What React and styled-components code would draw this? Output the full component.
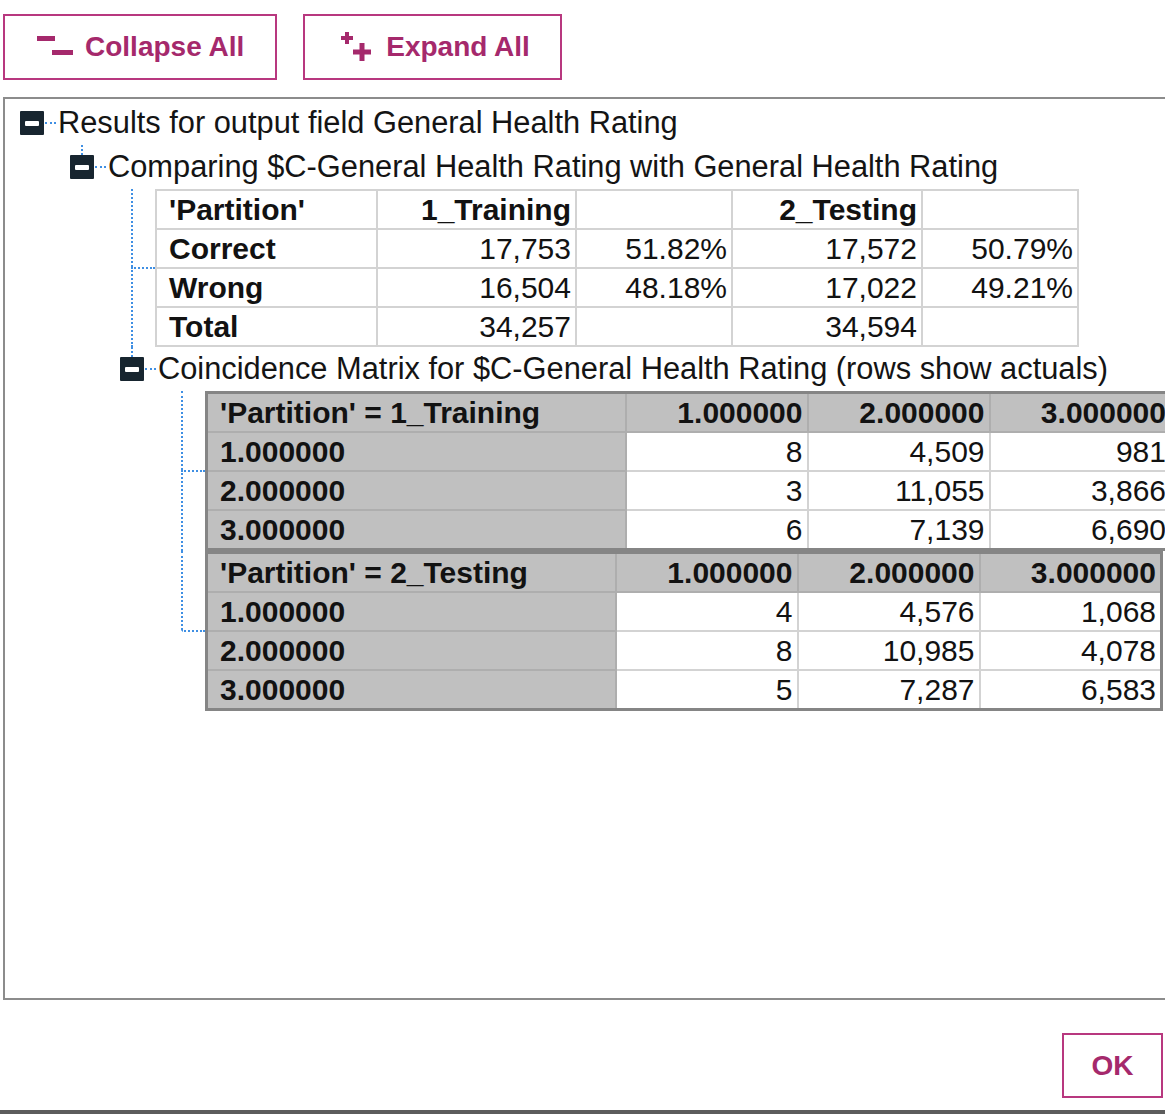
import React from 'react';
import styled, { createGlobalStyle } from 'styled-components';

const GlobalStyle = createGlobalStyle`
  html, body {
    margin: 0;
    padding: 0;
    background: #ffffff;
    overflow: hidden;
  }
  body {
    font-family: 'Liberation Sans', Arial, sans-serif;
    color: #151515;
  }
`

const Page = styled.div`
  width: 1165px;
  height: 1114px;
  display: flex;
  flex-direction: column;
  padding: 14px 0 0 3px;
  box-sizing: border-box;
`
const Toolbar = styled.div`
  display: flex;
  gap: 26px;
  height: 66px;
`
const ActionButton = styled.button`
  display: flex;
  align-items: center;
  gap: 12px;
  height: 66px;
  padding: 0 ${p => p.$padRight || 31}px 0 ${p => p.$padLeft || 32}px;
  background: #ffffff;
  border: 2px solid #b8387f;
  border-radius: 0;
  color: #a5296c;
  font-family: 'Liberation Sans', Arial, sans-serif;
  font-weight: bold;
  font-size: 28px;
  cursor: pointer;
  box-sizing: border-box;
`
const Panel = styled.div`
  margin-top: 17px;
  width: 1220px;
  height: 904px;
  border: 2px solid #8c8c8c;
  box-sizing: border-box;
  padding: 2px 0 0 15px;
  overflow: hidden;
`
const Footer = styled.div`
  display: flex;
  justify-content: flex-end;
  padding: 33px 2px 0 0;
`
const OkButton = styled(ActionButton)`
  width: 101px;
  height: 65px;
  justify-content: center;
  padding: 0;
`
const BottomBar = styled.div`
  margin: 12px 0 0 -3px;
  height: 4px;
  background: #5c5c5c;
`

/* tree */
const NodeRow = styled.div`
  display: flex;
  align-items: stretch;
  height: 44px;
`
const IconCol = styled.div`
  display: flex;
  flex-direction: column;
  width: 24px;
  flex-shrink: 0;
`
const Stem = styled.div`
  flex: 1;
  width: 11px;
  border-right: ${p => (p.$on ? '2px dotted #3f8fe3' : '2px solid transparent')};
`
const MinusBox = styled.div`
  width: 24px;
  height: 24px;
  background: #17252f;
  border-radius: 1px;
  display: flex;
  align-items: center;
  justify-content: center;
  &::before {
    content: '';
    width: 14px;
    height: 5px;
    background: #ffffff;
    border-radius: 1px;
  }
`
const HDots = styled.div`
  align-self: center;
  width: 11px;
  margin: 0 2px 0 1px;
  border-top: 2px dotted #3f8fe3;
`
const Label = styled.div`
  align-self: center;
  font-size: 30.8px;
  white-space: nowrap;
  color: #141414;
`
const Children = styled.div`
  margin-left: 50px;
  display: flex;
  flex-direction: column;
`
const Item = styled.div`
  display: flex;
`
const Gutter = styled.div`
  display: flex;
  flex-direction: column;
  width: 35px;
  flex-shrink: 0;
`
const GutterHalf = styled.div`
  flex: 1;
  margin-left: 11px;
  border-left: ${p => (p.$line ? '2px dotted #3f8fe3' : '2px solid transparent')};
  border-top: ${p => (p.$branch ? '2px dotted #3f8fe3' : 'none')};
`

/* tables */
const SummaryTable = styled.table`
  border-collapse: collapse;
  table-layout: fixed;
  border: 2px solid #a3a3a3;
  font-size: 30px;
`
const MatrixTable = styled.table`
  border-collapse: collapse;
  table-layout: fixed;
  border: 3px solid #858585;
  font-size: 30px;
  background: #c0c0c0;
`
const Cell = styled.td`
  height: 37px;
  padding: 0 ${p => (p.$right ? '4px' : '0')} 0 ${p => (p.$right ? '0' : '12px')};
  text-align: ${p => (p.$right ? 'right' : 'left')};
  font-weight: ${p => (p.$bold ? 'bold' : 'normal')};
  white-space: nowrap;
  overflow: hidden;
  color: #121212;
  border: 2px solid ${p => (p.$shade ? '#aeaeae' : '#d3d3d3')};
  background: ${p => (p.$shade ? '#c0c0c0' : '#ffffff')};
  line-height: 37px;
`

const CollapseIcon = () => (
  <svg width="36" height="22" viewBox="0 0 36 22">
    <rect x="0" y="0" width="18" height="5" fill="#a5296c" />
    <rect x="15" y="14" width="21" height="5" fill="#a5296c" />
  </svg>
)
const ExpandIcon = () => (
  <svg width="36" height="30" viewBox="0 0 36 30">
    <rect x="3" y="4" width="12" height="4" fill="#a5296c" />
    <rect x="7" y="0" width="4" height="12" fill="#a5296c" />
    <rect x="15" y="17.5" width="18" height="5" fill="#a5296c" />
    <rect x="21.5" y="11" width="5" height="18" fill="#a5296c" />
  </svg>
)

const Node = ({ label, stem, children }) => (
  <>
    <NodeRow>
      <IconCol>
        <Stem $on={stem} />
        <MinusBox />
        <Stem />
      </IconCol>
      <HDots />
      <Label>{label}</Label>
    </NodeRow>
    {children && <Children>{children}</Children>}
  </>
)

const Leaf = ({ last, children }) => (
  <Item>
    <Gutter>
      <GutterHalf $line />
      <GutterHalf $line={!last} $branch />
    </Gutter>
    {children}
  </Item>
)

const summary = [
  ['Correct', '17,753', '51.82%', '17,572', '50.79%'],
  ['Wrong', '16,504', '48.18%', '17,022', '49.21%'],
  ['Total', '34,257', '', '34,594', ''],
]

const matrices = [
  {
    title: "'Partition' = 1_Training",
    labelWidth: 419,
    rows: [
      ['1.000000', '8', '4,509', '981'],
      ['2.000000', '3', '11,055', '3,866'],
      ['3.000000', '6', '7,139', '6,690'],
    ],
  },
  {
    title: "'Partition' = 2_Testing",
    labelWidth: 409,
    rows: [
      ['1.000000', '4', '4,576', '1,068'],
      ['2.000000', '8', '10,985', '4,078'],
      ['3.000000', '5', '7,287', '6,583'],
    ],
  },
]

const Summary = () => (
  <SummaryTable>
    <colgroup>
      <col style={{ width: 221 }} />
      <col style={{ width: 199 }} />
      <col style={{ width: 156 }} />
      <col style={{ width: 190 }} />
      <col style={{ width: 156 }} />
    </colgroup>
    <tbody>
      <tr>
        <Cell $bold>'Partition'</Cell>
        <Cell $bold $right>1_Training</Cell>
        <Cell $right></Cell>
        <Cell $bold $right>2_Testing</Cell>
        <Cell $right></Cell>
      </tr>
      {summary.map(([name, ...vals]) => (
        <tr key={name}>
          <Cell $bold>{name}</Cell>
          {vals.map((v, i) => (
            <Cell key={i} $right>{v}</Cell>
          ))}
        </tr>
      ))}
    </tbody>
  </SummaryTable>
)

const Matrix = ({ title, labelWidth, rows }) => (
  <MatrixTable style={{ width: labelWidth + 546 }}>
    <colgroup>
      <col style={{ width: labelWidth }} />
      <col style={{ width: 182 }} />
      <col style={{ width: 182 }} />
      <col style={{ width: 182 }} />
    </colgroup>
    <tbody>
      <tr>
        <Cell $bold $shade>{title}</Cell>
        <Cell $bold $shade $right>1.000000</Cell>
        <Cell $bold $shade $right>2.000000</Cell>
        <Cell $bold $shade $right>3.000000</Cell>
      </tr>
      {rows.map(([name, ...vals]) => (
        <tr key={name}>
          <Cell $bold $shade>{name}</Cell>
          {vals.map((v, i) => (
            <Cell key={i} $right>{v}</Cell>
          ))}
        </tr>
      ))}
    </tbody>
  </MatrixTable>
)

export default function App() {
  return (
    <Page>
      <GlobalStyle />
      <Toolbar>
        <ActionButton $padLeft={32} $padRight={31}>
          <CollapseIcon />
          Collapse All
        </ActionButton>
        <ActionButton $padLeft={33} $padRight={30}>
          <ExpandIcon />
          Expand All
        </ActionButton>
      </Toolbar>
      <Panel>
        <Node label="Results for output field General Health Rating">
          <Node stem label="Comparing $C-General Health Rating with General Health Rating">
            <Leaf>
              <Summary />
            </Leaf>
            <Node stem label="Coincidence Matrix for $C-General Health Rating (rows show actuals)">
              <Leaf>
                <Matrix {...matrices[0]} />
              </Leaf>
              <Leaf last>
                <Matrix {...matrices[1]} />
              </Leaf>
            </Node>
          </Node>
        </Node>
      </Panel>
      <Footer>
        <OkButton>OK</OkButton>
      </Footer>
      <BottomBar />
    </Page>
  )
}
